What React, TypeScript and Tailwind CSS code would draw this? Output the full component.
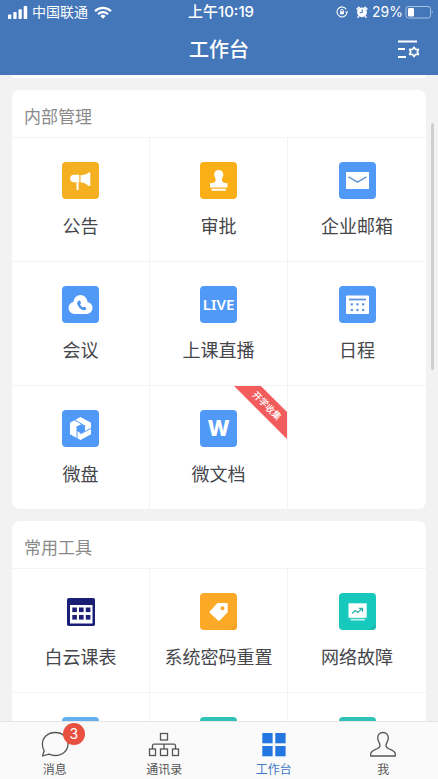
import React from 'react';

interface Tool {
  id: string;
  label?: string;
  icon: React.ReactNode;
  color: string;
  ribbon?: string;
}

interface ToolCardProps {
  title: string;
  tools: Tool[];
}

const MegaphoneIcon = () => (
  <svg viewBox="0 0 37 37" className="w-full h-full" fill="#fff">
    <path d="M12 12.7h5.3v7.6h-.8V28h-2v-7.7H12a3.8 3.8 0 0 1 0-7.6z" />
    <path d="M18.5 13.2c3.2 0 6.3-1 8.2-2.7h1.6v13.6h-1.6c-1.9-2-5-3.6-8.2-3.8z" />
  </svg>
);

const StampIcon = () => (
  <svg viewBox="0 0 37 37" className="w-full h-full" fill="#fff">
    <path d="M18.7 8c2.7 0 4.7 1.9 4.7 4.5 0 2-1.5 3.2-1.5 5.2 0 2.3 1.6 3.3 3.6 3.3h1a1 1 0 0 1 1 1v3.5H10V22a1 1 0 0 1 1-1h1c2 0 3.6-1 3.6-3.3 0-2-1.5-3.2-1.5-5.2C14.1 9.9 16 8 18.7 8z" />
    <path d="M11.5 26.7h14.4v2H11.5z" />
  </svg>
);

const MailIcon = () => (
  <svg viewBox="0 0 37 37" className="w-full h-full" fill="none">
    <rect x="7" y="10" width="23" height="17" rx="0.6" fill="#fff" />
    <path d="M9.5 14.8l9 5.4 9-5.4" stroke="#6596d8" strokeWidth="1.5" />
  </svg>
);

const CloudCallIcon = () => (
  <svg viewBox="0 0 37 37" className="w-full h-full">
    <path
      fill="#fff"
      d="M12.5 28a6 6 0 0 1-6-6c0-3 2-5.4 5-5.9C11.9 12 14.8 9 18.5 9s6.6 3 7 7.1c3 .5 5 2.9 5 5.9a6 6 0 0 1-6 6z"
    />
    <path
      fill="#4b92ea"
      d="M15.6 15.8l1.5-1.3c.5-.3 1 0 1.2.5l.6 1.9c.1.5-.9 1.3-.8 1.7.6 1.2 1.6 2.3 2.9 2.9.5.2 1.2-.8 1.7-.7l1.3 1.1c.5.5.4 1-.1 1.5-.6.7-1.6 1-2.7.7-3.2-1-5.7-4.5-6-6.7-.1-.6 0-1.2.4-1.6z"
    />
  </svg>
);

const ScheduleIcon = () => (
  <svg viewBox="0 0 37 37" className="w-full h-full">
    <rect x="7" y="9.5" width="23" height="18.5" rx="0.8" fill="#fff" />
    <g fill="#5b93de">
      <rect x="10" y="12.6" width="17" height="1.8" />
      <rect x="11.7" y="17.3" width="2.2" height="2.2" />
      <rect x="17.4" y="17.3" width="2.2" height="2.2" />
      <rect x="23.1" y="17.3" width="2.2" height="2.2" />
      <rect x="11.7" y="22.9" width="2.2" height="2.2" />
      <rect x="17.4" y="22.9" width="2.2" height="2.2" />
      <rect x="23.1" y="22.9" width="2.2" height="2.2" />
    </g>
  </svg>
);

const DriveIcon = () => (
  <svg viewBox="0 0 37 37" className="w-full h-full">
    <path fill="#fff" d="M18.5 7L29 12.8v11.4L18.5 30 8 24.2V12.8z" />
    <path fill="#5199f7" d="M19 14.2l4 2.3v4.6l-4 2.3-4-2.3v-4.6z" />
    <g stroke="#5199f7" strokeWidth="1">
      <path d="M12 9.6l11.5 6.6" />
      <path d="M29.5 18.2L18.5 23.8" />
      <path d="M15 16v13" />
    </g>
  </svg>
);

const TimetableIcon = () => (
  <svg viewBox="0 0 28 28" className="w-7 h-7">
    <rect width="28" height="28" rx="1.8" fill="#1a1e74" />
    <rect x="3" y="7" width="22.5" height="18.5" fill="#fff" />
    <g fill="#1a1e74">
      <rect x="5.3" y="9.5" width="4.6" height="4.6" />
      <rect x="12" y="9.5" width="4.6" height="4.6" />
      <rect x="18.8" y="9.5" width="4.6" height="4.6" />
      <rect x="5.3" y="17" width="4.6" height="4.6" />
      <rect x="12" y="17" width="4.6" height="4.6" />
      <rect x="18.8" y="17" width="4.6" height="4.6" />
    </g>
  </svg>
);

const TagIcon = () => (
  <svg viewBox="0 0 37 37" className="w-full h-full">
    <path fill="#f0a024" d="M37 30v7h-7z" />
    <path
      fill="#fff"
      fillRule="evenodd"
      d="M18.2 10h8.3a1.2 1.2 0 0 1 1.2 1.2v7.3c0 .5-.2.9-.5 1.2l-7.5 7.8c-.5.5-1.2.5-1.7 0l-8-7.5c-.5-.5-.5-1.2 0-1.7l7-7.7c.3-.4.7-.6 1.2-.6zm4.3 3.3a2 2 0 1 0 0 4 2 2 0 0 0 0-4z"
    />
  </svg>
);

const MonitorIcon = () => (
  <svg viewBox="0 0 37 37" className="w-full h-full" fill="none">
    <path fill="#1fb9ae" d="M37 30v7h-7z" />
    <rect x="9.5" y="10.3" width="18.2" height="14.5" fill="#fff" />
    <rect x="11.5" y="25.8" width="14.3" height="1.8" fill="#bdeeea" />
    <path d="M13 20.5l3.2-3 2.5 2 4.5-4M19.8 15.3h3.7v3.7" stroke="#2fb5ab" strokeWidth="1.3" />
  </svg>
);

const BubbleIcon = () => (
  <svg viewBox="0 0 28 26" className="w-7 h-[26px]" fill="none" stroke="#555" strokeWidth="1.3" strokeLinejoin="round">
    <path d="M14.2 1.5c7.3 0 12.8 5 12.8 11.5s-5.5 11.5-12.8 11.5c-2.5 0-4.5-.5-6.2-1.4L1.5 25l1.7-5.2C2 18 1.4 15.6 1.4 13c0-6.5 5.5-11.5 12.8-11.5z" />
  </svg>
);

const OrgIcon = () => (
  <svg viewBox="0 0 32 26" className="w-8 h-[26px]" fill="none" stroke="#555" strokeWidth="1.3">
    <rect x="12.5" y="2.5" width="7" height="6.5" />
    <rect x="1.5" y="18" width="6" height="6.5" />
    <rect x="12.5" y="18" width="7" height="6.5" />
    <rect x="24.5" y="18" width="6" height="6.5" />
    <path d="M4.5 18v-3.3a1.5 1.5 0 0 1 1.5-1.5h20a1.5 1.5 0 0 1 1.5 1.5V18M16 13.2V18" />
  </svg>
);

const AppsIcon = () => (
  <svg viewBox="0 0 26 26" className="w-[26px] h-[26px]" fill="#2477e0">
    <rect x="1.3" y="2" width="10.3" height="10.3" />
    <rect x="14.3" y="2" width="10.3" height="10.3" />
    <rect x="1.3" y="15" width="10.3" height="10.3" />
    <rect x="14.3" y="15" width="10.3" height="10.3" />
  </svg>
);

const MeIcon = () => (
  <svg viewBox="0 0 26 26" className="w-[26px] h-[26px]" fill="none" stroke="#555" strokeWidth="1.3" strokeLinejoin="round">
    <path d="M13 1.5c3.2 0 5.3 2.3 5.3 5.5 0 3-2.3 5-2.3 7.5 0 1.8 1.3 2.6 3.3 3.5 3 1.3 6 2.2 6 5v2H.7v-2c0-2.8 3-3.7 6-5 2-.9 3.3-1.7 3.3-3.5C10 12 7.7 10 7.7 7c0-3.2 2.1-5.5 5.3-5.5z" />
  </svg>
);

const internalTools: Tool[] = [
  { id: 'notice', label: '公告', icon: <MegaphoneIcon />, color: 'bg-[#f5b022]' },
  { id: 'approve', label: '审批', icon: <StampIcon />, color: 'bg-[#fbaf17]' },
  { id: 'mail', label: '企业邮箱', icon: <MailIcon />, color: 'bg-[#5199f7]' },
  { id: 'meeting', label: '会议', icon: <CloudCallIcon />, color: 'bg-[#5199f7]' },
  {
    id: 'live',
    label: '上课直播',
    icon: <span className="font-['Noto_Sans',sans-serif] text-[15px] font-semibold">LIVE</span>,
    color: 'bg-[#5199f7]',
  },
  { id: 'schedule', label: '日程', icon: <ScheduleIcon />, color: 'bg-[#5199f7]' },
  { id: 'drive', label: '微盘', icon: <DriveIcon />, color: 'bg-[#5199f7]' },
  {
    id: 'docs',
    label: '微文档',
    icon: <span className="font-[Inter,sans-serif] text-[21px] font-extrabold">W</span>,
    color: 'bg-[#5199f7]',
    ribbon: '开学收集',
  },
];

const commonTools: Tool[] = [
  { id: 'timetable', label: '白云课表', icon: <TimetableIcon />, color: 'bg-white' },
  { id: 'password', label: '系统密码重置', icon: <TagIcon />, color: 'bg-[#fba926]' },
  { id: 'network', label: '网络故障', icon: <MonitorIcon />, color: 'bg-[#17c8bd]' },
  { id: 'more-1', icon: null, color: 'bg-[#66b0f0]' },
  { id: 'more-2', icon: null, color: 'bg-[#2fc3b8]' },
  { id: 'more-3', icon: null, color: 'bg-[#2fc3b8]' },
];

const tabs = [
  { label: '消息', icon: <BubbleIcon />, badge: 3 },
  { label: '通讯录', icon: <OrgIcon /> },
  { label: '工作台', icon: <AppsIcon />, active: true },
  { label: '我', icon: <MeIcon /> },
];

const ToolCell: React.FC<{ tool?: Tool }> = ({ tool }) => {
  const cell = 'h-[124px] border-t border-r border-[#f3f3f3] nth-[3n]:border-r-0';
  if (!tool) return <div className={cell} />;

  return (
    <button type="button" className={`relative flex flex-col items-center pt-6 ${cell}`}>
      <span className={`flex items-center justify-center w-[37px] h-[37px] rounded-sm overflow-hidden text-white leading-none ${tool.color}`}>
        {tool.icon}
      </span>
      {tool.label && <span className="mt-4 text-lg leading-6 text-[#45464b] whitespace-nowrap">{tool.label}</span>}
      {tool.ribbon && (
        <span className="absolute top-0 right-0 w-[53px] h-[53px] overflow-hidden">
          <span className="absolute top-[10px] -left-2 w-[82px] h-[19px] rotate-45 bg-[#f25c5c] text-center text-[9px] leading-[19px] font-medium text-white">
            {tool.ribbon}
          </span>
        </span>
      )}
    </button>
  );
};

const ToolCard: React.FC<ToolCardProps> = ({ title, tools }) => {
  const blanks = (3 - (tools.length % 3)) % 3;
  return (
    <section className="shrink-0 rounded-lg overflow-hidden bg-white">
      <h2 className="h-[47px] px-3 pt-1 text-[17px] leading-[46px] text-[#8a8a8a]">{title}</h2>
      <div className="grid grid-cols-3">
        {tools.map((tool) => (
          <ToolCell key={tool.id} tool={tool} />
        ))}
        {Array.from({ length: blanks }, (_, idx) => (
          <ToolCell key={`blank-${idx}`} />
        ))}
      </div>
    </section>
  );
};

const StatusBar = () => (
  <div className="grid grid-cols-[1fr_auto_1fr] items-center h-6 pl-2 pr-1 text-sm">
    <div className="flex items-center gap-1">
      <svg viewBox="0 0 20 13" className="w-5 h-[13px]" fill="#fff">
        <rect x="0" y="8.5" width="3.3" height="4.5" rx="0.8" />
        <rect x="5.3" y="6" width="3.3" height="7" rx="0.8" />
        <rect x="10.5" y="3.2" width="3.3" height="9.8" rx="0.8" />
        <rect x="15.7" y="0" width="3.5" height="13" rx="0.8" />
      </svg>
      <span>中国联通</span>
      <svg viewBox="0 0 18 13" className="ml-0.5 w-[18px] h-[13px]" fill="none" stroke="#fff" strokeWidth="2.2">
        <path d="M1 5.2a11.3 11.3 0 0 1 16 0" />
        <path d="M4 8.3a7 7 0 0 1 10 0" />
        <path d="M9 12.8L6.3 10.100a3.800 3.800 0 0 1 5.400 0z" fill="#fff" stroke="none" />
      </svg>
    </div>
    <span className="text-[15px] font-medium">上午10:19</span>
    <div className="flex items-center justify-end">
      <svg viewBox="0 0 12 12" className="mr-2 w-3 h-3" fill="none" stroke="#fff">
        <path d="M10.3 3.3A5 5 0 1 0 11 6.5" strokeWidth="1.1" />
        <path d="M9 5.5h3.2L10.7 7.6z" fill="#fff" stroke="none" />
        <rect x="4" y="5.3" width="4" height="3" fill="#fff" stroke="none" />
        <path d="M4.7 5.5v-.8a1.3 1.3 0 0 1 2.6 0v.8" strokeWidth="0.9" />
      </svg>
      <svg viewBox="0 0 12 12" className="mr-1 w-3 h-3">
        <circle cx="6" cy="6.3" r="4.9" fill="#fff" />
        <path d="M.6 3.5L3.5.8M11.4 3.5L8.5.8M2.8 10.2l-1.1 1.5M9.2 10.2l1.1 1.5" stroke="#fff" strokeWidth="1.6" />
        <path d="M6.2 3.3v3.4H3.8" fill="none" stroke="#4476ba" strokeWidth="1" />
      </svg>
      <span>29%</span>
      <svg viewBox="0 0 29 13" className="ml-0.5 w-[29px] h-[13px]">
        <rect x="1" y="0.5" width="24.5" height="11.5" rx="2.5" fill="none" stroke="#a8c1e2" />
        <rect x="3" y="2" width="6" height="8.5" rx="1.2" fill="#fff" />
        <path d="M26.8 4.5c1.2.5 1.2 3 0 3.5z" fill="#a8c1e2" />
      </svg>
    </div>
  </div>
);

const App: React.FC = () => {
  return (
    <div className="flex flex-col h-screen bg-[#f2f2f2] font-[Inter,'Noto_Sans_CJK_SC',sans-serif]">
      <header className="shrink-0 bg-[#4476ba] text-white">
        <StatusBar />
        <div className="grid grid-cols-[1fr_auto_1fr] items-center h-[51px] px-4">
          <h1 className="col-start-2 text-xl font-medium">工作台</h1>
          <button type="button" aria-label="设置" className="justify-self-end">
            <svg viewBox="0 0 24 20" className="w-6 h-5" fill="none" stroke="#fff" strokeWidth="2">
              <path d="M0 1.500h19M0 9h7M0 17h8" />
              <path
                d="M16 7.3l1.6 2.2 2.8-.2-1.1 2.6 1.1 2.6-2.8-.2L16 16.5l-1.6-2.2-2.8.2 1.1-2.600-1.100-2.600 2.800.200z"
                strokeWidth="1.7"
                strokeLinejoin="round"
              />
            </svg>
          </button>
        </div>
      </header>

      <main className="relative flex flex-col flex-1 min-h-0 gap-3 px-3 overflow-hidden">
        <div className="shrink-0 h-[3px] rounded-b-lg bg-white" />
        <ToolCard title="内部管理" tools={internalTools} />
        <ToolCard title="常用工具" tools={commonTools} />
        <div className="absolute top-12 right-1 w-[3px] h-[247px] rounded-full bg-[#cfcfcf]" />
      </main>

      <nav className="grid grid-cols-4 shrink-0 border-t border-[#e4e4e4] bg-[#fafafa]">
        {tabs.map((tab) => (
          <a
            key={tab.label}
            href="#"
            className={`flex flex-col items-center gap-1 pt-[9px] text-xs leading-[18px] ${tab.active ? 'text-[#3f78c4]' : 'text-[#555]'}`}
          >
            <span className="relative">
              {tab.icon}
              {tab.badge && (
                <span className="absolute -top-2 -right-4 flex items-center justify-center w-[22px] h-[22px] rounded-full bg-[#e8503f] text-sm text-white">
                  {tab.badge}
                </span>
              )}
            </span>
            <span>{tab.label}</span>
          </a>
        ))}
      </nav>
    </div>
  );
};

export default App;
